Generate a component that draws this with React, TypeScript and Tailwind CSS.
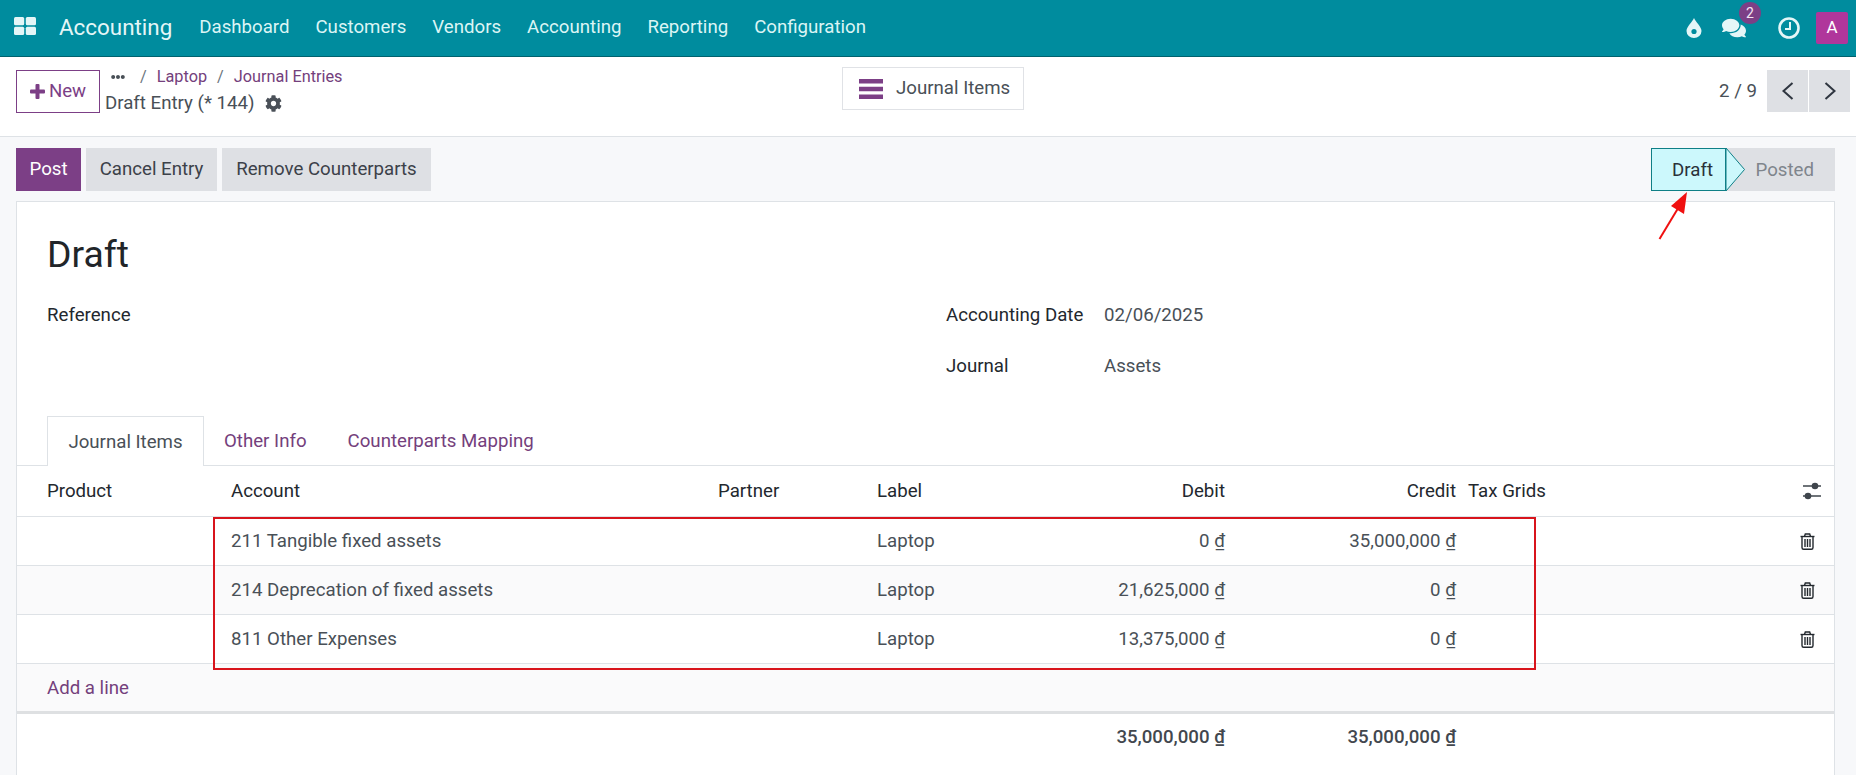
import React from 'react';
import { FaComments, FaCog, FaEllipsisH } from 'react-icons/fa';

const menus = ['Dashboard', 'Customers', 'Vendors', 'Accounting', 'Reporting', 'Configuration'];

const lines = [
  { account: '211 Tangible fixed assets', debit: '0', credit: '35,000,000', striped: false },
  { account: '214 Deprecation of fixed assets', debit: '21,625,000', credit: '0', striped: true },
  { account: '811 Other Expenses', debit: '13,375,000', credit: '0', striped: false },
];

const columns = 'grid grid-cols-[206px_487px_159px_171px_193px_231px_1fr_54px] items-center';

const Dong = () => <span className="underline underline-offset-2">₫</span>;

const AppsIcon = () => (
  <svg className="mb-[4px] ml-[14px]" width="22" height="18" viewBox="0 0 22 18" fill="#e4f6f7">
    <rect x="0" y="0" width="10.2" height="8.2" rx="1.5" />
    <rect x="11.8" y="0" width="10.2" height="8.2" rx="1.5" />
    <rect x="0" y="9.8" width="10.2" height="8.2" rx="1.5" />
    <rect x="11.8" y="9.8" width="10.2" height="8.2" rx="1.5" />
  </svg>
);

const DropIcon = () => (
  <svg width="16" height="20" viewBox="0 0 16 20">
    <path d="M8 0 C9.5 4 15.5 8.5 15.5 13 A7.5 7 0 0 1 0.5 13 C0.5 8.5 6.5 4 8 0 Z" fill="#e4f6f7" />
    <circle cx="8" cy="13.5" r="2.6" fill="#008c9e" />
  </svg>
);

const ClockIcon = () => (
  <svg className="ml-[31px]" width="24" height="24" viewBox="0 0 24 24" fill="none" stroke="#e4f6f7">
    <circle cx="12" cy="12" r="9.5" strokeWidth="2.6" />
    <path d="M13 6 V13 H8" strokeWidth="2" />
  </svg>
);

const TrashIcon = () => (
  <svg width="15" height="17" viewBox="0 0 15 17" fill="none" stroke="#23282e" strokeWidth="1.4">
    <path d="M0.5 3.5 H14.5" />
    <path d="M4.5 3.5 L5.3 1 H9.7 L10.5 3.5" />
    <path d="M2 3.5 V14.5 Q2 16.3 3.6 16.3 H11.4 Q13 16.3 13 14.5 V3.5" />
    <path d="M5 6 V14 M7.5 6 V14 M10 6 V14" />
  </svg>
);

const Navbar = () => (
  <header className="flex h-[57px] items-center border-b border-[#00626e] bg-[#008c9e] text-[#dcf5f5]">
    <AppsIcon />
    <span className="mb-[1px] ml-[23px] text-[22.4px] text-[#e4f6f7]">Accounting</span>
    <nav className="mb-[2px] ml-[27px] flex gap-[26px]">
      {menus.map((m) => (
        <span key={m}>{m}</span>
      ))}
    </nav>
    <div className="ml-auto flex items-center">
      <DropIcon />
      <div className="relative ml-[20px]">
        <FaComments className="h-[24px] w-[24px] text-[#e4f6f7]" />
        <span className="absolute left-[17px] top-[-14px] flex h-[22px] w-[22px] items-center justify-center rounded-full bg-[#7c3f86] text-[14px] text-[#f3e6f3]">2</span>
      </div>
      <ClockIcon />
      <span className="ml-[15px] mr-[8px] flex h-[32px] w-[32px] items-center justify-center rounded-[2px] bg-[#b0369b] text-[17px] text-white">A</span>
    </div>
  </header>
);

const ControlPanel = () => (
  <section className="relative flex h-[80px] items-start border-b border-[#dee2e6] bg-white pl-[16px] pt-[13px]">
    <button className="flex h-[43px] w-[84px] items-center justify-center gap-[4px] border border-[#7c3f86] pb-[2px] text-[#7c3f86]">
      <svg className="mt-[1px]" width="15" height="15" viewBox="0 0 15 15" fill="#7c3f86">
        <rect x="5.5" y="0" width="4" height="15" rx="1" />
        <rect x="0" y="5.5" width="15" height="4" rx="1" />
      </svg>
      New
    </button>
    <div className="ml-[5px] text-[#495057]">
      <div className="mt-[-3px] flex h-[20px] items-center text-[16.3px] text-[#74407c]">
        <FaEllipsisH className="ml-[6px] h-[14px] w-[14px] text-[#495057]" />
        <span className="ml-[15px] text-[#6c757d]">/</span>
        <span className="ml-[10px]">Laptop</span>
        <span className="ml-[10px] text-[#6c757d]">/</span>
        <span className="ml-[10px]">Journal Entries</span>
      </div>
      <div className="mt-[4px] flex items-center leading-[24px]">
        Draft Entry (* 144)
        <FaCog className="ml-[10px] h-[17px] w-[17px] text-[#4a5058]" />
      </div>
    </div>
    <button className="absolute left-[842px] top-[10px] flex h-[43px] w-[182px] items-center border border-[#e0e2e6] pb-[2px] pl-[15px] text-[#495057]">
      <svg className="mt-[2px]" width="26" height="20" viewBox="0 0 26 20" fill="#7c3f86">
        <rect x="1" y="0" width="24" height="4.5" />
        <rect x="1" y="7.75" width="24" height="4.5" />
        <rect x="1" y="15.5" width="24" height="4.5" />
      </svg>
      <span className="ml-[12px]">Journal Items</span>
    </button>
    <div className="ml-auto mr-[6px] flex items-center">
      <span className="mr-[10px] text-[#495057]">2 / 9</span>
      <div className="flex gap-[1px]">
        <button className="flex h-[42px] w-[41px] items-center justify-center bg-[#dee0e4]">
          <svg width="14" height="20" viewBox="0 0 14 20" fill="none" stroke="#2f3640" strokeWidth="2">
            <path d="M11.5 2 L2.5 10 L11.5 18" />
          </svg>
        </button>
        <button className="flex h-[42px] w-[41px] items-center justify-center bg-[#dee0e4]">
          <svg width="14" height="20" viewBox="0 0 14 20" fill="none" stroke="#2f3640" strokeWidth="2">
            <path d="M2.5 2 L11.5 10 L2.5 18" />
          </svg>
        </button>
      </div>
    </div>
  </section>
);

const ActionBar = () => (
  <div className="flex h-[64px] items-start justify-between pl-[16px] pr-[21px] pt-[11px]">
    <div className="flex gap-[5px] text-[#3c4149]">
      <button className="h-[43px] w-[65px] bg-[#7c3f86] pb-[1px] text-white">Post</button>
      <button className="h-[43px] w-[131px] bg-[#dee0e4] pb-[1px]">Cancel Entry</button>
      <button className="h-[43px] w-[209px] bg-[#dee0e4] pb-[1px]">Remove Counterparts</button>
    </div>
    <div className="relative flex h-[43px]">
      <div className="z-10 flex w-[75px] items-center justify-end border border-[#0f7f86] bg-[#ccf8fc] pr-[12px] text-[#2a3138]">Draft</div>
      <div className="flex w-[109px] items-center justify-end bg-[#dee0e4] pr-[21px] text-[#7f858c]">Posted</div>
      <svg className="absolute left-[74px] top-0 z-20" width="22" height="43" viewBox="0 0 22 43">
        <path d="M1 0 L19.5 21.5 L1 43 Z" fill="#ccf8fc" stroke="#0f7f86" strokeWidth="1" />
      </svg>
    </div>
  </div>
);

const TableHeader = () => (
  <div className={`${columns} h-[51px] border-b border-[#dee2e6] pb-[1px] text-[#23282e]`}>
    <span className="pl-[30px]">Product</span>
    <span className="pl-[8px]">Account</span>
    <span className="pl-[8px]">Partner</span>
    <span className="pl-[8px]">Label</span>
    <span className="pr-[8px] text-right">Debit</span>
    <span className="pr-[8px] text-right">Credit</span>
    <span className="pl-[4px]">Tax Grids</span>
    <span className="flex justify-center pl-[10px]">
      <svg width="20" height="18" viewBox="0 0 20 18" fill="none" stroke="#3f454c" strokeWidth="1.4">
        <path d="M1 4 H19 M1 14 H19" />
        <circle cx="13" cy="4" r="3.3" fill="#3f454c" stroke="none" />
        <circle cx="6" cy="14" r="3.3" fill="#3f454c" stroke="none" />
      </svg>
    </span>
  </div>
);

const TableRow = ({ account, debit, credit, striped }: (typeof lines)[number]) => (
  <div className={`${columns} h-[49px] border-b border-[#dee2e6] text-[#495057] ${striped ? 'bg-[#fafafb]' : 'bg-white'}`}>
    <span />
    <span className="pl-[8px]">{account}</span>
    <span />
    <span className="pl-[8px]">Laptop</span>
    <span className="pr-[8px] text-right">
      {debit} <Dong />
    </span>
    <span className="pr-[8px] text-right">
      {credit} <Dong />
    </span>
    <span />
    <span className="flex justify-start pl-[20px]">
      <TrashIcon />
    </span>
  </div>
);

const JournalTable = () => (
  <>
    <TableHeader />
    {lines.map((l) => (
      <TableRow key={l.account} {...l} />
    ))}
    <div className="flex h-[50px] items-center border-b-[3px] border-[#dee0e2] bg-[#fafafb] pl-[30px] text-[#74407c]">Add a line</div>
    <div className={`${columns} h-[46px] font-medium text-[#42474e]`}>
      <span />
      <span />
      <span />
      <span />
      <span className="pr-[8px] text-right">
        35,000,000 <Dong />
      </span>
      <span className="pr-[8px] text-right">
        35,000,000 <Dong />
      </span>
    </div>
  </>
);

const App: React.FC = () => {
  return (
    <div className="relative h-[775px] overflow-hidden bg-[#f7f8fa] font-['Roboto',sans-serif] text-[18.67px]">
      <Navbar />
      <ControlPanel />
      <ActionBar />

      <main className="ml-[16px] mr-[21px] h-[574px] border border-b-0 border-[#dee2e6] bg-white">
        <div className="px-[30px]">
          <h1 className="pt-[23px] text-[37.33px] leading-[58px] text-[#212529]">Draft</h1>
          <div className="mt-[6px] grid grid-cols-[899px_158px_1fr] grid-rows-[51px_51px] items-center text-[#23282e]">
            <span>Reference</span>
            <span>Accounting Date</span>
            <span className="text-[#495057]">02/06/2025</span>
            <span />
            <span>Journal</span>
            <span className="text-[#495057]">Assets</span>
          </div>
        </div>

        <div className="mt-[25px] flex h-[50px] border-b border-[#dee2e6] pl-[30px] text-[#74407c]">
          <div className="flex h-[50px] w-[157px] items-center justify-center border border-b-0 border-[#dee2e6] bg-white text-[#495057]">Journal Items</div>
          <div className="ml-[20px] flex items-center">Other Info</div>
          <div className="ml-[41px] flex items-center">Counterparts Mapping</div>
        </div>

        <JournalTable />
      </main>

      {/* Red annotations over the screenshot */}
      <div className="absolute left-[213px] top-[517px] h-[153px] w-[1323px] border-2 border-[#d8141c]" />
      <svg className="absolute left-[1650px] top-[188px]" width="50" height="56" viewBox="0 0 50 56">
        <path d="M9.5 51 L30 17" stroke="#f01010" strokeWidth="2" fill="none" />
        <path d="M37 4 L21 18 L34 26 Z" fill="#f01010" />
      </svg>
    </div>
  );
};

export default App;
